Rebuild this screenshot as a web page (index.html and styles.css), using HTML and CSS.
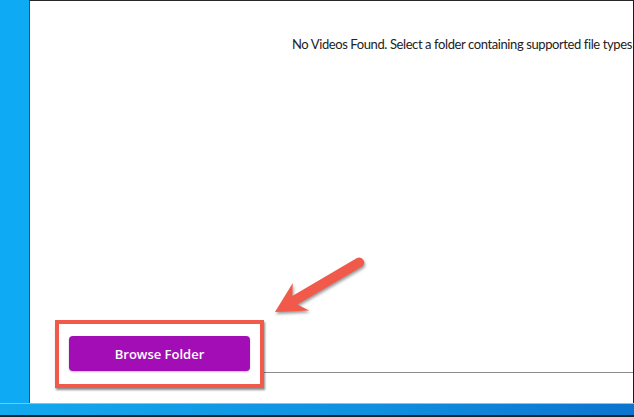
FILE: index.html
```html
<!DOCTYPE html>
<html lang="en">
<head>
  <meta charset="UTF-8">
  <title>Video Player - No Videos</title>
  <link rel="stylesheet" href="styles.css">
</head>
<body>
  <div class="desktop">
    <div class="window">
      <div class="message">No Videos Found. Select a folder containing supported file types</div>
      <div class="spacer"></div>
      <div class="footer">
        <button class="browse-button">Browse Folder</button>
        <div class="rule"></div>
      </div>
    </div>
    <div class="taskbar"></div>
  </div>

  <!-- annotation overlay -->
  <div class="highlight"></div>
  <svg class="arrow" width="634" height="417" viewBox="0 0 634 417">
    <path d="M275 312 L292.8 283 L292.3 296 L357 258 A5 5 0 0 1 362 266.6 L297.3 304.6 L309 310.6 Z" fill="#f15a4a"/>
  </svg>
</body>
</html>
```

FILE: styles.css
```css
html, body {
  margin: 0;
  padding: 0;
}
body {
  width: 634px;
  height: 417px;
  overflow: hidden;
  background: #0eaaf4;
  font-family: "Open Sans", "Noto Sans", sans-serif;
  position: relative;
}
.desktop {
  display: flex;
  flex-direction: column;
  height: 417px;
}
.window {
  margin-left: 29px;
  height: 402px;
  background: #fff;
  border-left: 1px solid #1f5777;
  border-top: 1px solid #262626;
  border-right: 1px solid #1a1a1a;
  display: flex;
  flex-direction: column;
  overflow: hidden;
}
.message {
  padding-top: 35px;
  padding-left: 262px;
  font-family: Lato, "Open Sans", sans-serif;
  font-size: 13px;
  letter-spacing: -0.4px;
  color: #222;
  white-space: nowrap;
}
.spacer {
  flex: 1;
}
.footer {
  display: flex;
  align-items: flex-end;
  padding-left: 39px;
  padding-bottom: 32px;
}
.browse-button {
  width: 181px;
  height: 35px;
  background: #a30db5;
  color: #fff;
  border: none;
  border-radius: 4px;
  font-family: "Open Sans", "Noto Sans", sans-serif;
  font-size: 13px;
  font-weight: 600;
  box-shadow: 0 1px 2px rgba(0,0,0,0.25);
}
.rule {
  flex: 1;
  height: 1px;
  background: #8c8c8c;
  margin-left: 11px;
  margin-bottom: -2px;
}
.taskbar {
  flex: 1;
  background: linear-gradient(to right, #12a9ef, #0f8fe0 60%, #0b74cf);
  border-top: 1px solid #6fcdf5;
  border-bottom: 2px solid #17262f;
}
.highlight {
  position: absolute;
  left: 55px;
  top: 320px;
  width: 201px;
  height: 60px;
  border: 4px solid #f15a4a;
  box-shadow: 1px 2px 2px rgba(0,0,0,0.45);
}
.arrow {
  position: absolute;
  left: 0;
  top: 0;
  filter: drop-shadow(1px 2px 1.5px rgba(0,0,0,0.4));
}
```
